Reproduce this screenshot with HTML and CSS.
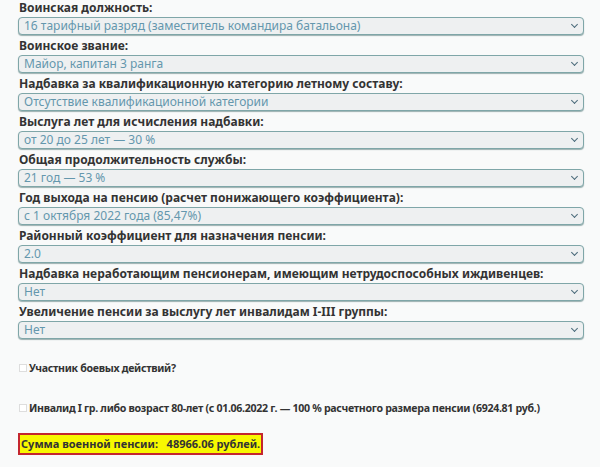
FILE: index.html
```html
<!DOCTYPE html>
<html lang="ru">
<head>
<meta charset="utf-8">
<link rel="stylesheet" href="styles.css">
</head>
<body>
<div class="calc">
  <div class="field">
    <div class="label">Воинская должность:</div>
    <div class="select"><span>16 тарифный разряд (заместитель командира батальона)</span><i class="chev"></i></div>
  </div>
  <div class="field">
    <div class="label">Воинское звание:</div>
    <div class="select"><span>Майор, капитан 3 ранга</span><i class="chev"></i></div>
  </div>
  <div class="field">
    <div class="label">Надбавка за квалификационную категорию летному составу:</div>
    <div class="select"><span>Отсутствие квалификационной категории</span><i class="chev"></i></div>
  </div>
  <div class="field">
    <div class="label">Выслуга лет для исчисления надбавки:</div>
    <div class="select"><span>от 20 до 25 лет — 30 %</span><i class="chev"></i></div>
  </div>
  <div class="field">
    <div class="label">Общая продолжительность службы:</div>
    <div class="select"><span>21 год — 53 %</span><i class="chev"></i></div>
  </div>
  <div class="field">
    <div class="label">Год выхода на пенсию (расчет понижающего коэффициента):</div>
    <div class="select"><span>с 1 октября 2022 года (85,47%)</span><i class="chev"></i></div>
  </div>
  <div class="field">
    <div class="label">Районный коэффициент для назначения пенсии:</div>
    <div class="select"><span>2.0</span><i class="chev"></i></div>
  </div>
  <div class="field">
    <div class="label">Надбавка неработающим пенсионерам, имеющим нетрудоспособных иждивенцев:</div>
    <div class="select"><span>Нет</span><i class="chev"></i></div>
  </div>
  <div class="field">
    <div class="label">Увеличение пенсии за выслугу лет инвалидам I-III группы:</div>
    <div class="select"><span>Нет</span><i class="chev"></i></div>
  </div>
  <div class="check first"><i class="box"></i>Участник боевых действий?</div>
  <div class="check second"><i class="box"></i>Инвалид I гр. либо возраст 80-лет (с 01.06.2022 г. — 100 % расчетного размера пенсии (6924.81 руб.)</div>
  <div class="result">Сумма военной пенсии:&nbsp;&nbsp; 48966.06 рублей.</div>
</div>
</body>
</html>
```
FILE: styles.css
```css
html, body {
  margin: 0;
  padding: 0;
  background: #f9fafa;
}
body {
  font-family: "Noto Sans", "Open Sans", sans-serif;
  color: #333;
}
.calc {
  padding: 0 16px 0 18px;
  display: flex;
  flex-direction: column;
}
.field {
  display: flex;
  flex-direction: column;
  height: 38px;
}
.label {
  font-size: 12px;
  font-weight: bold;
  height: 17px;
  line-height: 16px;
  padding-left: 1px;
  color: #333;
}
.select {
  height: 16px;
  border: 1px solid #7fa6a8;
  border-radius: 4px;
  background: #eef0f1;
  box-shadow: 0 1px 1px #9bb0b0;
  display: flex;
  align-items: center;
  justify-content: space-between;
  font-size: 12px;
  color: #6497ad;
  padding: 0 6px 0 5px;
}
.select span {
  line-height: 16px;
}
.chev {
  width: 4px;
  height: 4px;
  border-right: 1.5px solid #4a6a7a;
  border-bottom: 1.5px solid #4a6a7a;
  transform: rotate(45deg);
  margin-top: -3px;
}
.check {
  font-size: 10.6px;
  letter-spacing: -0.3px;
  font-weight: bold;
  color: #333;
  display: flex;
  align-items: center;
  white-space: nowrap;
  line-height: 16px;
}
.check.first { margin-top: 18px; }
.check.second { margin-top: 24px; }
.box {
  width: 6px;
  height: 6px;
  border: 1px solid #ddd;
  background: #fff;
  margin-right: 2px;
  margin-left: 1px;
  flex: none;
}
.result {
  margin-top: 17px;
  align-self: flex-start;
  background: #f8f800;
  border: 2px solid #c4262e;
  font-size: 11px;
  font-weight: bold;
  color: #333;
  padding: 1px 1px 1px 1px;
  line-height: 16px;
}
```
